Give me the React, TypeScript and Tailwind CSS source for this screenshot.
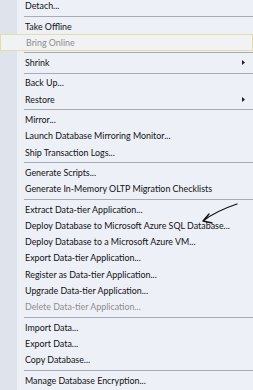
import React from "react";

type Item = { label: string; disabled?: boolean; sub?: boolean; hot?: boolean } | "sep";

const items: Item[] = [
  { label: "Detach..." },
  "sep",
  { label: "Take Offline" },
  { label: "Bring Online", disabled: true, hot: true },
  "sep",
  { label: "Shrink", sub: true },
  "sep",
  { label: "Back Up..." },
  { label: "Restore", sub: true },
  "sep",
  { label: "Mirror..." },
  { label: "Launch Database Mirroring Monitor..." },
  { label: "Ship Transaction Logs..." },
  "sep",
  { label: "Generate Scripts..." },
  { label: "Generate In-Memory OLTP Migration Checklists" },
  "sep",
  { label: "Extract Data-tier Application..." },
  { label: "Deploy Database to Microsoft Azure SQL Database..." },
  { label: "Deploy Database to a Microsoft Azure VM..." },
  { label: "Export Data-tier Application..." },
  { label: "Register as Data-tier Application..." },
  { label: "Upgrade Data-tier Application..." },
  { label: "Delete Data-tier Application...", disabled: true },
  "sep",
  { label: "Import Data..." },
  { label: "Export Data..." },
  { label: "Copy Database..." },
  "sep",
  { label: "Manage Database Encryption..." },
];

export default function App() {
  return (
    <div className="relative w-[253px] h-[390px] overflow-hidden bg-[#eef0f8] font-['Lato',sans-serif] text-[8.9px] text-[#111]">
      <div className="flex h-full">
        {/* gutter */}
        <div className="w-[17px] shrink-0 bg-[#dfe3ec]" />
        <div className="flex-1 flex flex-col mt-[-2.2px]">
          {items.map((it, i) =>
            it === "sep" ? (
              <div key={i} className="h-[4px] shrink-0 ml-[7px] flex flex-col justify-center">
                <div className="h-px shrink-0 bg-[#a7abb4]" />
              </div>
            ) : (
              <div
                key={i}
                className={
                  "h-[16.3px] shrink-0 flex items-center justify-between pr-[8px] " +
                  (it.hot
                    ? "-ml-[17px] pl-[25px] border border-[#e3dda8] bg-[#f1f2f4] "
                    : "pl-[8px] ") +
                  (it.disabled ? "text-[#8e8e8e]" : "")
                }
              >
                <span className="whitespace-nowrap">{it.label}</span>
                {it.sub && (
                  <svg width="3" height="5" viewBox="0 0 3 5">
                    <path d="M0 0 L3 2.5 L0 5 Z" fill="#1e1e1e" />
                  </svg>
                )}
              </div>
            )
          )}
        </div>
      </div>
      {/* hand-drawn arrow */}
      <svg className="absolute left-0 top-0" width="253" height="390" viewBox="0 0 253 390">
        <path
          d="M237 204 C225 208 212 214 203 221 M203 221 L209 214 M203 221 L212 223"
          stroke="#111"
          strokeWidth="1.3"
          fill="none"
          strokeLinecap="round"
        />
      </svg>
    </div>
  );
}
